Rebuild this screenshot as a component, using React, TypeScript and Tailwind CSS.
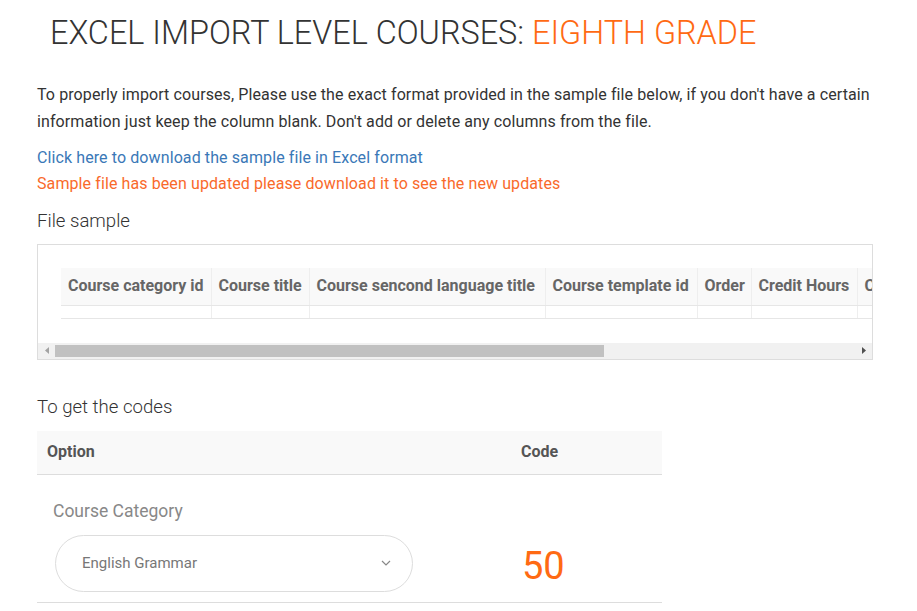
import React from "react";

const cols = [
  { label: "Course category id", w: 150 },
  { label: "Course title", w: 98 },
  { label: "Course sencond language title", w: 236 },
  { label: "Course template id", w: 152 },
  { label: "Order", w: 54 },
  { label: "Credit Hours", w: 106 },
  { label: "Course type", w: 110 },
];

export default function App() {
  return (
    <div className="bg-white min-h-[611px] w-[917px] overflow-hidden" style={{ fontFamily: "Roboto, 'Liberation Sans', sans-serif" }}>
      <div className="pl-[37px] pr-[44px]">
        <h1 className="pl-[13px] pt-[13px] text-[32.4px] leading-[40px] font-light text-[#333] whitespace-nowrap">
          EXCEL IMPORT LEVEL COURSES: <span className="text-[#ff6a13]">EIGHTH GRADE</span>
        </h1>
        <p className="mt-[28px] text-[16px] tracking-[0.1px] leading-[27px] text-[#333] w-[845px]">
          To properly import courses, Please use the exact format provided in the sample file below, if you don't have a certain information just keep the column blank. Don't add or delete any columns from the file.
        </p>
        <div className="mt-[10px] text-[16px] tracking-[0.1px] leading-[26px]">
          <div className="text-[#3a78b7]">Click here to download the sample file in Excel format</div>
          <div className="text-[#f96a2b]">Sample file has been updated please download it to see the new updates</div>
        </div>
        <h3 className="mt-[12px] text-[18.6px] font-light text-[#333] leading-[24px]">File sample</h3>
        <div className="mt-[11px] w-[836px] border border-[#dddddd] overflow-hidden">
          <div className="px-[23px] pt-[23px] pb-[24px] overflow-hidden">
            <table className="border-collapse" style={{ tableLayout: "fixed", width: 906 }}>
              <colgroup>
                {cols.map((c) => (
                  <col key={c.label} style={{ width: c.w }} />
                ))}
              </colgroup>
              <thead>
                <tr className="bg-[#f9f9f9]">
                  {cols.map((c, i) => (
                    <th
                      key={c.label}
                      className={`h-[37px] px-[7px] text-left text-[16px] font-bold text-[#666] whitespace-nowrap overflow-hidden border-b border-[#e6e6e6] ${i > 0 ? "border-l border-l-[#eeeeee]" : ""}`}
                    >
                      {c.label}
                    </th>
                  ))}
                </tr>
              </thead>
              <tbody>
                <tr>
                  {cols.map((c, i) => (
                    <td
                      key={c.label}
                      className={`h-[13px] border-b border-[#e6e6e6] ${i > 0 ? "border-l border-l-[#eeeeee]" : ""}`}
                    ></td>
                  ))}
                </tr>
              </tbody>
            </table>
          </div>
          <div className="h-[16px] bg-[#f1f1f1] flex items-center">
            <div className="w-[17px] h-[16px] flex items-center justify-center">
              <svg width="4" height="7" viewBox="0 0 4 7"><polygon points="4,0 0,3.5 4,7" fill="#a3a3a3" /></svg>
            </div>
            <div className="w-[549px] h-[12px] bg-[#c1c1c1]" />
            <div className="flex-1" />
            <div className="w-[17px] h-[16px] flex items-center justify-center">
              <svg width="4" height="7" viewBox="0 0 4 7"><polygon points="0,0 4,3.5 0,7" fill="#505050" /></svg>
            </div>
          </div>
        </div>
        <h3 className="mt-[35px] text-[18.6px] font-light text-[#333] leading-[24px]">To get the codes</h3>
        <div className="mt-[12px] w-[625px]">
          <div className="flex h-[44px] items-center bg-[#f9f9f9] border-b border-[#dddddd] text-[16px] font-bold text-[#555]">
            <div className="pl-[10px] w-[484px]">Option</div>
            <div>Code</div>
          </div>
          <div className="flex items-center border-b border-[#dddddd] pb-[10px]">
            <div className="pl-[16px] w-[485px]">
              <div className="pt-[25px] text-[17.5px] text-[#888] leading-[22px]">Course Category</div>
              <div className="mt-[13px] ml-[2px] w-[358px] h-[57px] rounded-full border border-[#dddddd] flex items-center justify-between pl-[26px] pr-[21px]">
                <span className="text-[15px] text-[#777]">English Grammar</span>
                <svg width="10" height="6" viewBox="0 0 10 6"><polyline points="1,1 5,5 9,1" fill="none" stroke="#888" strokeWidth="1.2" /></svg>
              </div>
            </div>
            <div className="mt-[66px] text-[38px] text-[#ff6a13] leading-[44px]">50</div>
          </div>
        </div>
      </div>
    </div>
  );
}
